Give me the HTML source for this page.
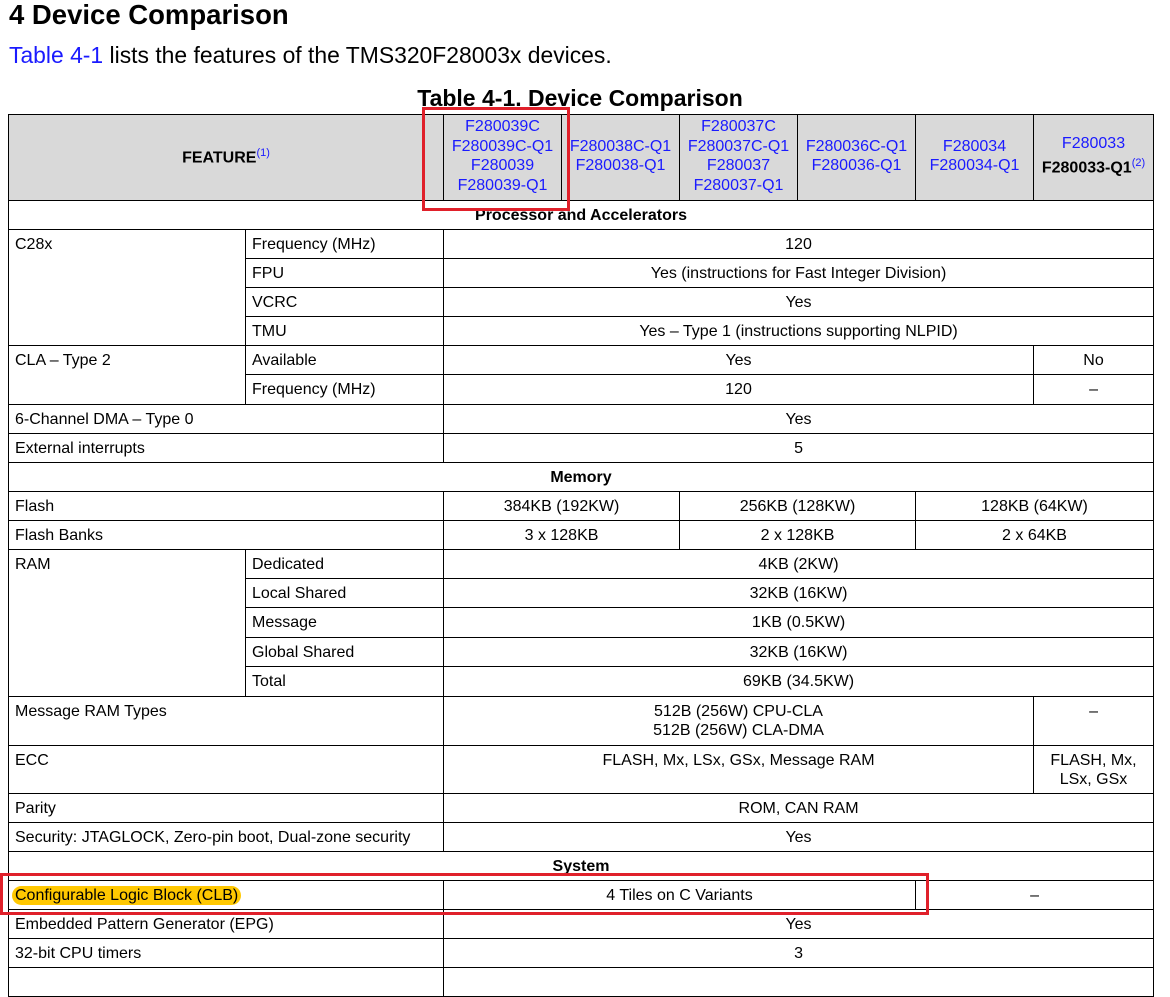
<!DOCTYPE html>
<html><head><meta charset="utf-8"><style>
*{box-sizing:border-box}
body{margin:0;width:1170px;height:974px;overflow:hidden;background:#fff;font-family:"Liberation Sans",Arial,sans-serif;color:#000;position:relative}
h1{position:absolute;left:9px;top:0;margin:0;font-size:27.5px;font-weight:bold;line-height:30px}
.intro{position:absolute;left:9px;top:42px;font-size:22.9px;line-height:27px}
.intro a{color:#1a1aff;text-decoration:none}
.cap{position:absolute;left:0;width:1160px;text-align:center;top:86px;font-size:23px;font-weight:bold;line-height:25px}
table{position:absolute;left:8px;top:114px;border-collapse:collapse;table-layout:fixed;width:1145px}
td{border:1px solid #000;font-size:16px;line-height:19px;padding:5px 6px 0;vertical-align:top;overflow:visible;white-space:nowrap}
.c{text-align:center}
.h td{background:#d9d9d9;vertical-align:middle;text-align:center;color:#1a1aff;font-size:16px;line-height:19.5px;padding:0 0 3px}
.h td.f{color:#000;font-weight:bold}
sup{font-size:11px;color:#1a1aff;font-weight:normal}
.b{font-weight:bold;text-align:center}
tr{height:29px}
.hl{background:#ffc800;border-radius:10px;padding:1px 3px;margin-left:-3px}
.red{position:absolute;border:3px solid #e0202a}
</style></head><body>
<h1>4 Device Comparison</h1>
<div class="intro"><a>Table 4-1</a> lists the features of the TMS320F28003x devices.</div>
<div class="cap">Table 4-1. Device Comparison</div>
<table>
<colgroup><col style="width:237px"><col style="width:198px"><col style="width:118px"><col style="width:118px"><col style="width:118px"><col style="width:118px"><col style="width:118px"><col style="width:120px"></colgroup>
<tr class="h" style="height:86px"><td colspan="2" class="f">FEATURE<sup>(1)</sup></td><td>F280039C<br>F280039C-Q1<br>F280039<br>F280039-Q1</td><td>F280038C-Q1<br>F280038-Q1</td><td>F280037C<br>F280037C-Q1<br>F280037<br>F280037-Q1</td><td>F280036C-Q1<br>F280036-Q1</td><td>F280034<br>F280034-Q1</td><td>F280033<br><b style="color:#000">F280033-Q1</b><sup>(2)</sup></td></tr>
<tr><td colspan="8" class="b">Processor and Accelerators</td></tr>
<tr><td rowspan="4">C28x</td><td>Frequency (MHz)</td><td colspan="6" class="c">120</td></tr>
<tr><td>FPU</td><td colspan="6" class="c">Yes (instructions for Fast Integer Division)</td></tr>
<tr><td>VCRC</td><td colspan="6" class="c">Yes</td></tr>
<tr><td>TMU</td><td colspan="6" class="c">Yes – Type 1 (instructions supporting NLPID)</td></tr>
<tr><td rowspan="2">CLA – Type 2</td><td>Available</td><td colspan="5" class="c">Yes</td><td class="c">No</td></tr>
<tr style="height:30px"><td>Frequency (MHz)</td><td colspan="5" class="c">120</td><td class="c">–</td></tr>
<tr><td colspan="2">6-Channel DMA – Type 0</td><td colspan="6" class="c">Yes</td></tr>
<tr><td colspan="2">External interrupts</td><td colspan="6" class="c">5</td></tr>
<tr><td colspan="8" class="b">Memory</td></tr>
<tr><td colspan="2">Flash</td><td colspan="2" class="c">384KB (192KW)</td><td colspan="2" class="c">256KB (128KW)</td><td colspan="2" class="c">128KB (64KW)</td></tr>
<tr><td colspan="2">Flash Banks</td><td colspan="2" class="c">3 x 128KB</td><td colspan="2" class="c">2 x 128KB</td><td colspan="2" class="c">2 x 64KB</td></tr>
<tr><td rowspan="5">RAM</td><td>Dedicated</td><td colspan="6" class="c">4KB (2KW)</td></tr>
<tr><td>Local Shared</td><td colspan="6" class="c">32KB (16KW)</td></tr>
<tr style="height:30px"><td>Message</td><td colspan="6" class="c">1KB (0.5KW)</td></tr>
<tr><td>Global Shared</td><td colspan="6" class="c">32KB (16KW)</td></tr>
<tr style="height:30px"><td>Total</td><td colspan="6" class="c">69KB (34.5KW)</td></tr>
<tr style="height:49px"><td colspan="2">Message RAM Types</td><td colspan="5" class="c">512B (256W) CPU-CLA<br>512B (256W) CLA-DMA</td><td class="c">–</td></tr>
<tr style="height:48px"><td colspan="2">ECC</td><td colspan="5" class="c">FLASH, Mx, LSx, GSx, Message RAM</td><td class="c">FLASH, Mx,<br>LSx, GSx</td></tr>
<tr><td colspan="2">Parity</td><td colspan="6" class="c">ROM, CAN RAM</td></tr>
<tr><td colspan="2">Security: JTAGLOCK, Zero-pin boot, Dual-zone security</td><td colspan="6" class="c">Yes</td></tr>
<tr><td colspan="8" class="b">System</td></tr>
<tr><td colspan="2"><span class="hl">Configurable Logic Block (CLB)</span></td><td colspan="4" class="c">4 Tiles on C Variants</td><td colspan="2" class="c" style="vertical-align:middle;padding-top:0">–</td></tr>
<tr><td colspan="2">Embedded Pattern Generator (EPG)</td><td colspan="6" class="c">Yes</td></tr>
<tr><td colspan="2">32-bit CPU timers</td><td colspan="6" class="c">3</td></tr>
<tr><td colspan="2">&nbsp;</td><td colspan="6"></td></tr>
</table>
<div class="red" style="left:422px;top:107px;width:148px;height:104px"></div>
<div class="red" style="left:0;top:873px;width:929px;height:42px"></div>
</body></html>
